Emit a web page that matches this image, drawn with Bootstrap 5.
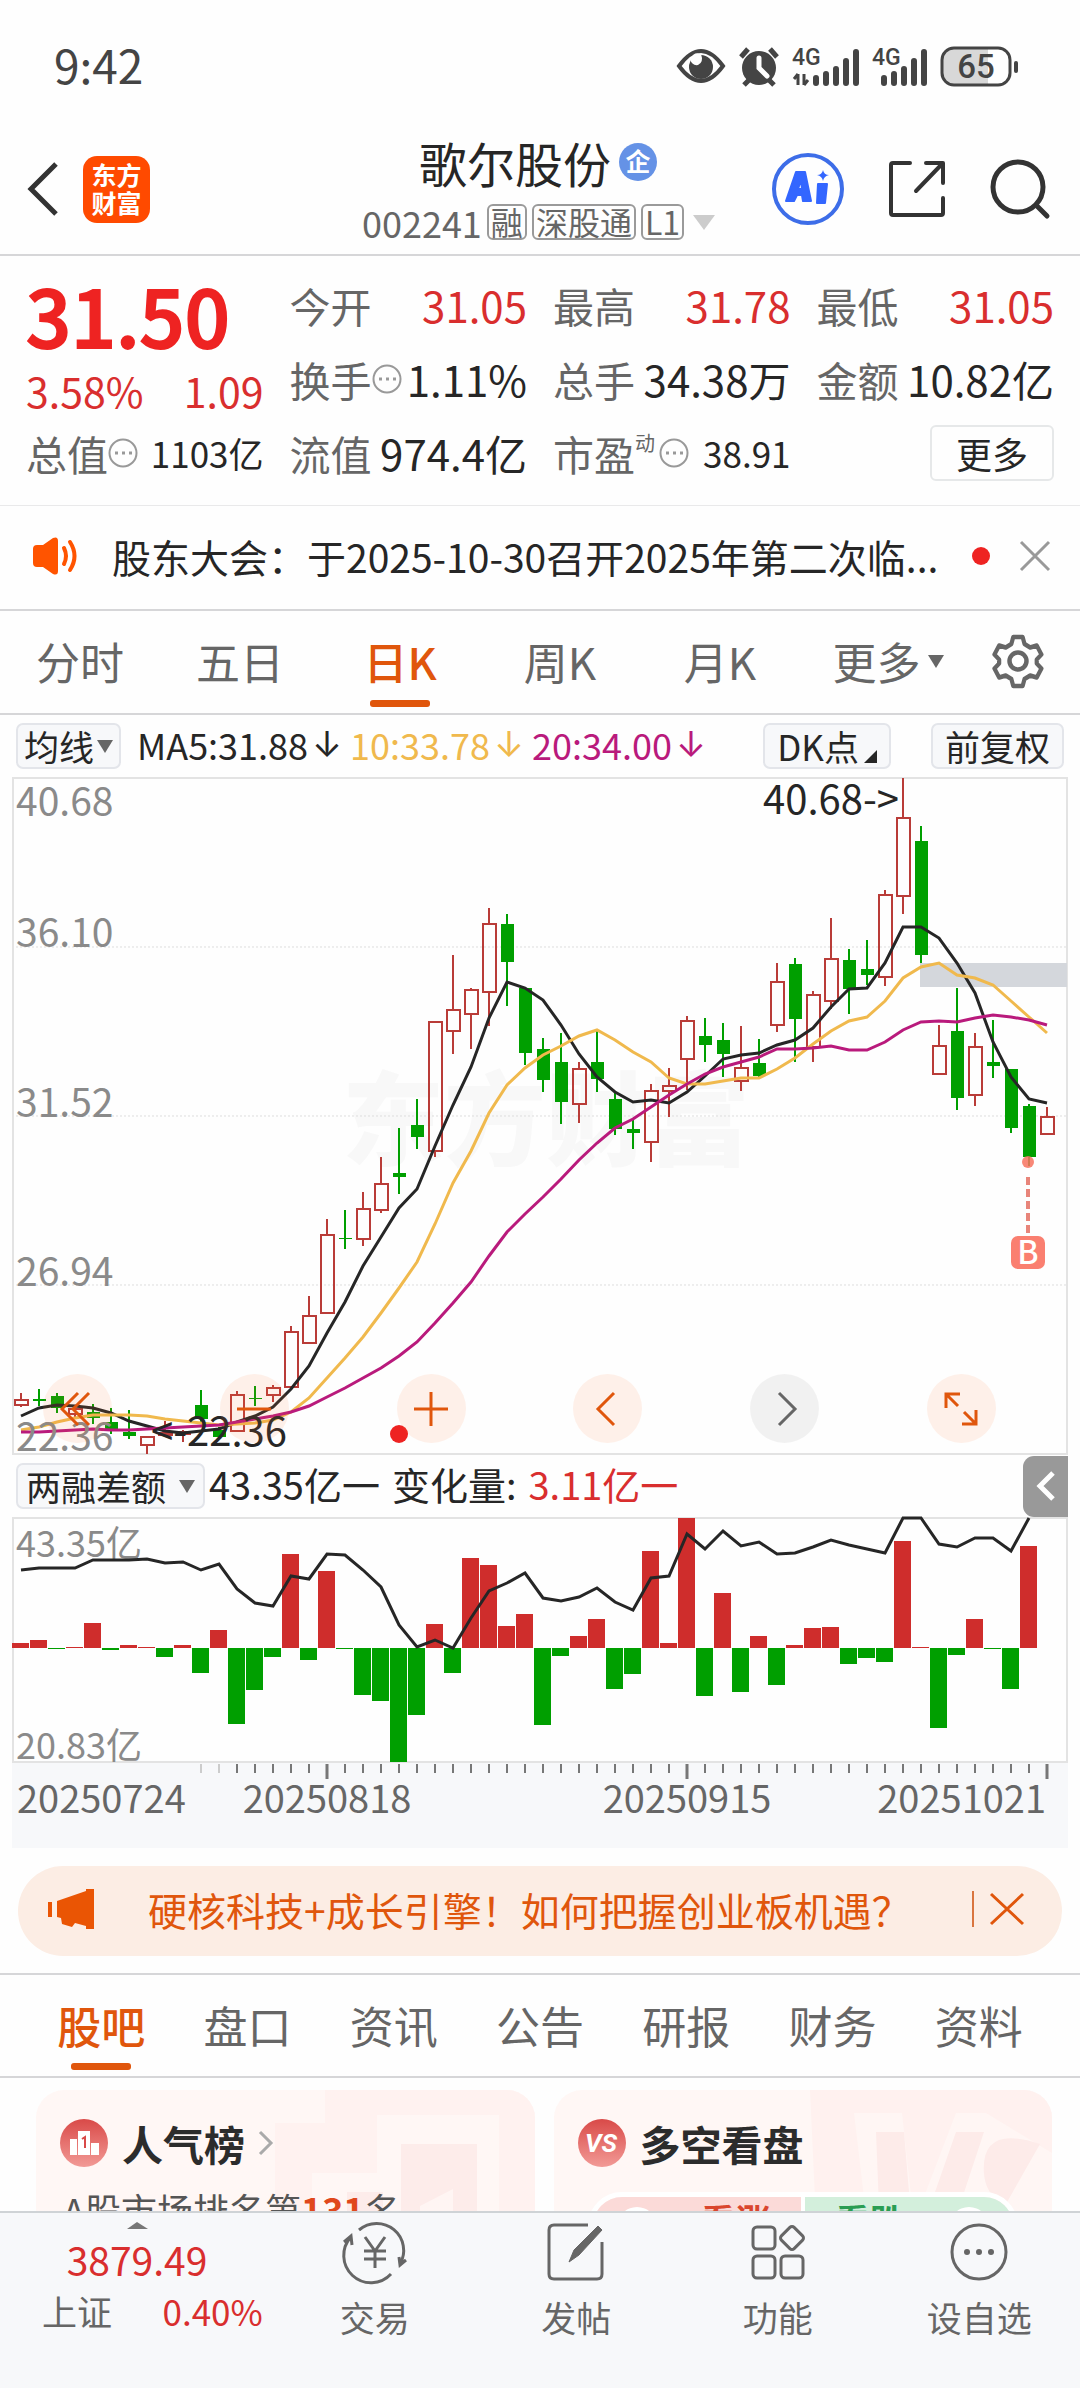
<!DOCTYPE html>
<html lang="zh-CN">
<head>
<meta charset="utf-8">
<meta name="viewport" content="width=device-width, initial-scale=1">
<title>歌尔股份 002241</title>
<link href="https://cdn.jsdelivr.net/npm/bootstrap@5.3.0/dist/css/bootstrap.min.css" rel="stylesheet">
<style>
:root{--up:#d92e2e;--down:#009f00;--accent:#e0560c;--ink:#262626;--muted:#666;--line:#d6d6d8;--soft:#f7f8fa}
body{font-family:"Noto Sans CJK SC","Noto Sans",sans-serif;color:var(--ink);background:#fefefe;font-size:36px;line-height:48px}
svg{display:block;overflow:visible}
button{font-family:inherit;color:inherit;background:none;border:0;padding:0}
a{color:inherit;text-decoration:none}
.app-shell{height:100vh;overflow:hidden}
.hair{border-bottom:2px solid var(--line)}
.hair-soft{border-bottom:1px solid #e9e9ea}
.status-bar{height:134px;padding:0 60px 0 54px;color:#444;font-size:46px}
.status-bar .clock{line-height:60px;margin-top:-6px}
.head-bar{padding:0 30px 10px 27px}
.head-side{flex:1 1 0}
.head-tools{gap:44px}
.stock-name{font-size:48px;line-height:56px}
.code-line{height:44px;margin-top:10px;color:var(--muted);gap:5px}
.tag-box{border:2px solid #9a9a9a;border-radius:6px;font-size:32px;line-height:30px;height:36px;padding:0 2px}
.tri{width:0;height:0;border-left:8px solid transparent;border-right:8px solid transparent;border-top:13px solid #666;display:inline-block}
.tri-lg{border-left-width:11px;border-right-width:11px;border-top-width:15px;border-top-color:#ccc}
.brand-tile{width:67px;height:67px;border-radius:14px;background:#ff4a00;color:#fff;font-size:25px;line-height:28px;font-weight:700;text-align:center;padding-top:4px}
.quote-grid{display:grid;grid-template-columns:repeat(4,1fr);column-gap:26px;padding:12px 26px 15px}
.q-row{height:74px;display:flex;align-items:center;justify-content:space-between;white-space:nowrap}
.q-label{font-size:41px;color:var(--muted);display:flex;align-items:center}
.q-label sup{font-size:20px}
.q-val{font-size:42px}
.q-small{font-size:35px}
.up{color:var(--up)}
.price-now{font-size:79px;line-height:92px;height:92px;font-weight:500;-webkit-text-stroke:2px #ee2322;color:#ee2322}
.price-chg{height:56px;padding-top:4px;font-size:41px}
.more-btn{border:2px solid #e6e8e9;border-radius:6px;width:124px;height:56px;font-size:36px;line-height:48px}
.notice-bar{height:105px;padding:0 30px 4px 33px;font-size:39px}
.notice-bar a{margin-left:33px}
.notice-bar button{margin-left:30px}
.k-tabs{display:grid;grid-template-columns:repeat(5,160fr) 176fr 84fr;padding-right:20px;height:104px;color:var(--muted);font-size:44px}
.info-tabs{display:grid;grid-template-columns:repeat(7,1fr);padding:0 28px;height:103px;color:var(--muted);font-size:44px}
.tab-item{position:relative;display:flex;align-items:center;justify-content:center;gap:7px;padding-bottom:2px}
.tab-item.on{color:var(--accent);font-weight:500}
.tab-item.on::after{content:"";position:absolute;bottom:6px;width:60px;height:7px;border-radius:3px;background:var(--accent)}
.tool-row{height:62px;padding:0 16px;white-space:nowrap}
.chip{background:var(--soft);border:2px solid #e3e5ea;border-radius:7px;height:46px;font-size:35px;line-height:40px;padding:0 8px;display:flex;align-items:center;gap:5px}
.chip-tight{padding:0 6px;gap:3px}
.chip-wide{padding:0 12px}
.chip-dk{margin-right:40px}
.ma{font-size:36px;display:flex;align-items:center;padding-bottom:4px}
.ma i{font-family:"Inter",sans-serif;font-style:normal;font-weight:400;margin-left:4px}
.m10{color:#f0b94d}.m20{color:#b91a7c}
.ind{font-size:38px}
.chart-wrap{margin:0 12px;position:relative}
.chart-wrap svg{width:100%;height:auto}
.chart-wrap text{font-family:"Noto Sans CJK SC","Noto Sans",sans-serif}
.pad-ctl{position:absolute;left:0;right:0;bottom:12px;display:flex;justify-content:space-between;padding:0 72px 0 31px}
.pad-ctl button{width:69px;height:69px;border-radius:50%;background:rgba(255,120,50,.1);display:flex;align-items:center;justify-content:center}
.pad-ctl button.off{background:rgba(0,0,0,.05)}
.pad-ctl svg{width:40px;height:40px}
.ind-row{padding-right:12px}
.fold-btn{background:#999;border-radius:11px 0 0 11px;width:45px;height:61px;display:flex;align-items:center;justify-content:center}
.axis-strip{background:var(--soft)}
.promo{margin:18px 18px 17px;height:90px;border-radius:45px;background:#fcede4;color:var(--accent);font-size:39px;padding:0 38px 4px 30px}
.promo a{margin-left:54px}
.promo button{margin-left:16px}
.promo-split{width:2px;height:36px;background:#d9753f}
.feed{padding:12px 28px 0 36px;gap:19px;font-size:36px}
.feed-card{flex:1 1 0;height:260px;border-radius:28px;background:#fff7f5;position:relative;overflow:hidden;padding:24px}
.feed-card .ghost{position:absolute;right:0;top:0;width:260px;height:260px}
.feed-card h2{font-size:41px;line-height:58px;margin:0;font-weight:700;color:#2c2c2c;position:relative;gap:14px}
.rank-line{position:relative;color:#555;margin-top:13px;padding-left:3px}
.rank-line b{color:#e0481c}
.vote{position:relative;display:flex;margin:20px 10px 0;border:5px solid #fff;border-radius:34px;height:68px;overflow:hidden;font-size:35px;font-weight:700;line-height:46px}
.vote span{flex:1;display:flex;align-items:flex-start;gap:44px;padding:0 24px}
.vote i{width:40px;height:40px;margin-top:10px;border-radius:50%;background:#fff}
.v-up{background:#fbdad8;color:#d9462e;border-right:4px solid #fff}
.v-dn{background:#d3efdc;color:#2a9d53;justify-content:flex-end}
.dock{background:var(--soft);border-top:2px solid #cfd3d6;height:177px;color:var(--muted);font-size:35px;line-height:44px}
.dock-index{flex:0 0 274px;display:grid;grid-template-columns:auto auto;justify-content:space-between;align-content:start;padding:9px 10px 0 42px}
.dock-index .wide{grid-column:1/3;justify-self:center;margin-right:32px}
.dock-index .pts{font-size:39px;line-height:60px}
.dock-item{flex:1 1 0;display:flex;flex-direction:column;align-items:center;padding-top:9px;gap:13px}
.dock-item svg{width:64px;height:60px}
</style>
</head>
<body>
<div class="app-shell d-flex flex-column">

<div class="status-bar d-flex align-items-center justify-content-between flex-shrink-0">
  <span class="clock">9:42</span>
  <svg width="344" height="42" viewBox="0 0 344 42" fill="#444" font-family="Roboto,sans-serif" font-weight="500">
    <path d="M3 20Q25-10 47 20Q25 50 3 20Z" fill="none" stroke="#444" stroke-width="4"/><circle cx="25" cy="21" r="12"/><path d="M14 13q4-8 11-5q3 8-3 11q-6 1-8-6z" fill="#fefefe"/>
    <circle cx="83" cy="22" r="17"/><path d="M65 11l7-8M101 11l-7-8M73 34l-5 5M93 34l5 5" stroke="#444" stroke-width="5"/><path d="M83 12v10l8 8" stroke="#fefefe" stroke-width="5" fill="none" stroke-linecap="round"/>
    <text x="116" y="19" font-size="23">4G</text><path d="M122 28v11M118 33l4-5M128 28v11M132 34l-4 5" stroke="#444" stroke-width="3"/>
    <path d="M140 37v-5M150 37V28M160 37V23M170 37V15M180 37V6" stroke="#444" stroke-width="6" stroke-linecap="round"/>
    <text x="196" y="19" font-size="23">4G</text>
    <path d="M208 37v-5M218 37V28M228 37V23M238 37V15M248 37V6" stroke="#444" stroke-width="6" stroke-linecap="round"/>
    <path d="M278 2h34v36h-34a12 12 0 0 1-12-12V14a12 12 0 0 1 12-12Z" fill="#d8d8d8"/><rect x="266" y="2" width="68" height="37" rx="12" fill="none" stroke="#444" stroke-width="3"/><path d="M340 17v8" stroke="#444" stroke-width="4" stroke-linecap="round"/>
    <text x="300" y="32" font-size="33" text-anchor="middle">65</text>
  </svg>
</div>

<header class="head-bar hair d-flex align-items-center flex-shrink-0">
  <div class="head-side d-flex align-items-center gap-4">
    <button aria-label="返回"><svg width="32" height="54" viewBox="0 0 32 54" fill="none" stroke="#333" stroke-width="5"><path d="M29 2L4 27L29 52"/></svg></button>
    <div class="brand-tile">东方<br>财富</div>
  </div>
  <div class="d-flex flex-column align-items-center">
    <div class="d-flex align-items-center gap-2"><span class="stock-name">歌尔股份</span>
      <svg width="39" height="39" viewBox="0 0 39 39"><circle cx="19" cy="19" r="19" fill="#6592e6"/><text x="19" y="28" font-size="25" font-weight="700" fill="#fff" text-anchor="middle">企</text></svg></div>
    <div class="code-line d-flex align-items-center"><span>002241</span><span class="tag-box">融</span><span class="tag-box">深股通</span><span class="tag-box">L1</span><span class="tri tri-lg ms-1"></span></div>
  </div>
  <div class="head-side head-tools d-flex align-items-center justify-content-end">
    <button aria-label="AI"><svg width="72" height="74" viewBox="0 0 72 74"><circle cx="36" cy="37" r="34" fill="none" stroke="#3d6de8" stroke-width="4"/><g fill="#3366ff" stroke="#3366ff" stroke-width="2" stroke-linejoin="round"><path fill-rule="evenodd" d="M24 20h9l6 29h-8l-1-6h-5l-3 6h-8ZM29 28l-3 9h4Z"/><path d="M46 32h9l-2 19h-8Z"/></g><path d="M51 18q1 5 6 5q-5 1-6 6q-1-5-6-6q5 0 6-5z" fill="#3366ff"/></svg></button>
    <button aria-label="分享"><svg width="58" height="58" viewBox="0 0 58 58" fill="none" stroke="#333" stroke-width="4" stroke-linecap="round" stroke-linejoin="round"><path d="M22 3H5a2 2 0 0 0-2 2v48a2 2 0 0 0 2 2h48a2 2 0 0 0 2-2V38M38 3h17v20M54 4L28 31"/></svg></button>
    <button aria-label="搜索"><svg width="60" height="60" viewBox="0 0 60 60" fill="none" stroke="#333" stroke-width="5" stroke-linecap="round"><circle cx="28" cy="28" r="25"/><path d="M47 47L57 57"/></svg></button>
  </div>
</header>

<section class="quote-grid hair-soft flex-shrink-0">
  <div>
    <div class="price-now">31.50</div>
    <div class="price-chg up d-flex align-items-center justify-content-between"><span>3.58%</span><span>1.09</span></div>
    <div class="q-row"><span class="q-label">总值<svg width="30" height="30" viewBox="0 0 30 30"><circle cx="15" cy="15" r="13.500" fill="none" stroke="#999" stroke-width="2"/><path d="M7 15h3m4 0h3m4 0h3" stroke="#999" stroke-width="3"/></svg></span><span class="q-small">1103亿</span></div>
  </div>
  <div>
    <div class="q-row"><span class="q-label">今开</span><span class="q-val up">31.05</span></div>
    <div class="q-row"><span class="q-label">换手<svg width="30" height="30" viewBox="0 0 30 30"><circle cx="15" cy="15" r="13.500" fill="none" stroke="#999" stroke-width="2"/><path d="M7 15h3m4 0h3m4 0h3" stroke="#999" stroke-width="3"/></svg></span><span class="q-val">1.11%</span></div>
    <div class="q-row"><span class="q-label">流值</span><span class="q-val">974.4亿</span></div>
  </div>
  <div>
    <div class="q-row"><span class="q-label">最高</span><span class="q-val up">31.78</span></div>
    <div class="q-row"><span class="q-label">总手</span><span class="q-val">34.38万</span></div>
    <div class="q-row"><span class="q-label">市盈<sup>动</sup><svg class="ms-1" width="30" height="30" viewBox="0 0 30 30"><circle cx="15" cy="15" r="13.500" fill="none" stroke="#999" stroke-width="2"/><path d="M7 15h3m4 0h3m4 0h3" stroke="#999" stroke-width="3"/></svg></span><span class="q-small">38.91</span></div>
  </div>
  <div>
    <div class="q-row"><span class="q-label">最低</span><span class="q-val up">31.05</span></div>
    <div class="q-row"><span class="q-label">金额</span><span class="q-val">10.82亿</span></div>
    <div class="q-row justify-content-end"><button class="more-btn">更多</button></div>
  </div>
</section>

<section class="notice-bar hair d-flex align-items-center flex-shrink-0">
  <svg width="46" height="38" viewBox="0 0 46 38"><path d="M4 8h6L20 1q5-2 5 3v30q0 5-5 3L10 30H4q-4 0-4-4V12q0-4 4-4Z" fill="#ff5400"/><path d="M31 11q4 8 0 16M37 5q9 14 0 28" fill="none" stroke="#ff5400" stroke-width="4" stroke-linecap="round"/></svg>
  <a href="#" class="flex-grow-1 text-nowrap">股东大会：于2025-10-30召开2025年第二次临...</a>
  <svg width="18" height="18" viewBox="0 0 18 18"><circle cx="9" cy="9" r="9" fill="#ee2322"/></svg>
  <button aria-label="关闭"><svg width="30" height="30" viewBox="0 0 30 30" stroke="#999" stroke-width="3"><path d="M1 1L29 29M29 1L1 29"/></svg></button>
</section>

<nav class="k-tabs hair flex-shrink-0">
  <button class="tab-item">分时</button><button class="tab-item">五日</button><button class="tab-item on">日K</button><button class="tab-item">周K</button><button class="tab-item">月K</button><button class="tab-item">更多<span class="tri"></span></button>
  <button class="tab-item" aria-label="设置"><svg width="52" height="54" viewBox="0 0 52 54" fill="none" stroke="#666" stroke-width="4.500" stroke-linejoin="round"><path d="M21 3h10l2 7 6 3.500 7-2 5 9-5 5v4l5 5-5 9-7-2-6 3.500-2 7H21l-2-7-6-3.500-7 2-5-9 5-5v-4l-5-5 5-9 7 2L19 10Z" transform="translate(1.500 0) scale(.94 1)"/><circle cx="26" cy="27" r="8.500"/></svg></button>
</nav>

<section class="tool-row d-flex align-items-center flex-shrink-0">
  <button class="chip chip-tight">均线<span class="tri"></span></button>
  <span class="ma ms-3">MA5:31.88<i>↓</i></span>
  <span class="ma m10 ms-2">10:33.78<i>↓</i></span>
  <span class="ma m20 ms-2">20:34.00<i>↓</i></span>
  <button class="chip chip-wide chip-dk ms-auto">DK点<svg width="13" height="13" class="align-self-end mb-1" viewBox="0 0 13 13"><path d="M13 0v13H0z" fill="#262626"/></svg></button>
  <button class="chip chip-wide">前复权</button>
</section>

<section class="chart-wrap flex-shrink-0">
  <svg id="kline" viewBox="0 0 1056 678" role="img" aria-label="日K线图"></svg>
  <div class="pad-ctl">
    <button aria-label="最左"><svg viewBox="0 0 40 40" fill="none" stroke="#e0560c" stroke-width="3"><path d="M20 4L4 20L20 36M31 4L15 20L31 36"/></svg></button>
    <button aria-label="缩小"><svg viewBox="0 0 40 40" stroke="#e0560c" stroke-width="3"><path d="M3 20h34"/></svg></button>
    <button aria-label="放大"><svg viewBox="0 0 40 40" stroke="#e0560c" stroke-width="3"><path d="M3 20h34M20 3v34"/></svg></button>
    <button aria-label="左移"><svg viewBox="0 0 40 40" fill="none" stroke="#e0560c" stroke-width="3"><path d="M26 4L10 20L26 36"/></svg></button>
    <button class="off" aria-label="右移"><svg viewBox="0 0 40 40" fill="none" stroke="#666" stroke-width="3"><path d="M14 4L30 20L14 36"/></svg></button>
    <button aria-label="全屏"><svg viewBox="0 0 40 40" fill="none" stroke="#e0560c" stroke-width="3"><path d="M5 19V5H19M5 5L17 17M35 21V35H21M35 35L23 23"/></svg></button>
  </div>
</section>

<section class="tool-row ind-row d-flex align-items-center flex-shrink-0">
  <button class="chip">两融差额<span class="tri ms-2"></span></button>
  <span class="ma ind ms-1">43.35亿一</span>
  <span class="ma ind ms-2 ps-1">变化量:</span>
  <span class="ma ind ms-2 ps-1 up">3.11亿一</span>
  <button class="fold-btn ms-auto" aria-label="展开"><svg width="18" height="30" viewBox="0 0 18 30" fill="none" stroke="#fff" stroke-width="5"><path d="M16 2L3 15L16 28"/></svg></button>
</section>

<section class="chart-wrap flex-shrink-0">
  <svg id="margin" viewBox="0 0 1056 246" role="img" aria-label="两融差额"></svg>
  <svg id="dates" class="axis-strip" viewBox="0 0 1056 85" role="img" aria-label="日期"></svg>
</section>

<section class="promo d-flex align-items-center flex-shrink-0">
  <svg width="46" height="40" viewBox="0 0 46 40" fill="#ea5504"><path d="M0 13h4v15H0zM9 12L38 2V0h8v40h-8v-3l-11-3-3 4-10-3-1-6-4-1z"/></svg>
  <a href="#" class="flex-grow-1 text-nowrap">硬核科技+成长引擎！如何把握创业板机遇？</a>
  <span class="promo-split"></span>
  <button aria-label="关闭"><svg width="34" height="32" viewBox="0 0 34 32" stroke="#e0560c" stroke-width="3"><path d="M1 1L33 31M33 1L1 31"/></svg></button>
</section>
<div class="hair flex-shrink-0"></div>

<nav class="info-tabs hair flex-shrink-0">
  <button class="tab-item on">股吧</button><button class="tab-item">盘口</button><button class="tab-item">资讯</button><button class="tab-item">公告</button><button class="tab-item">研报</button><button class="tab-item">财务</button><button class="tab-item">资料</button>
</nav>

<main class="feed d-flex flex-grow-1 overflow-hidden">
  <article class="feed-card">
    <svg class="ghost" viewBox="0 0 260 260"><path d="M50 0h210v260H50V150H0V33h50z" fill="#fff2f0"/><path d="M102 25h122v235H102zM37 83h65v177H37z" fill="#fff7f5"/><path d="M126 54h76v206h-76zM72 102h36v158H72z" fill="#fdecea"/><path d="M145 116l33-17v161h-20V124l-13 6z" fill="#fff5f3"/></svg>
    <h2 class="d-flex align-items-center"><svg width="48" height="48" viewBox="0 0 48 48"><defs><linearGradient id="rg" x2="0" y2="1"><stop stop-color="#d94a48"/><stop offset="1" stop-color="#f29a96"/></linearGradient></defs><circle cx="24" cy="24" r="24" fill="url(#rg)"/><path d="M10 20h7v16h-7zM18 12h12v24H18zM31 24h8v12h-8z" fill="#fff"/><path d="M22 20l3-2v11" fill="none" stroke="#d94a48" stroke-width="2"/></svg><span>人气榜</span><svg width="14" height="24" viewBox="0 0 14 24" fill="none" stroke="#aaa" stroke-width="3"><path d="M1 1L12 12L1 23"/></svg></h2>
    <div class="rank-line">A股市场排名第<b>131</b>名</div>
  </article>
  <article class="feed-card">
    <svg class="ghost" viewBox="0 0 260 260"><path d="M18 0h242v260H30z" fill="#fff1ef"/><path d="M62 23h48l12 110 42-110h30l66 40v197H90z" fill="#fff6f4"/><path d="M84 42h28l10 120 42-120h28l-66 200h-34zM248 54q-60-20-56 30c4 40 46 30 44 70s-50 30-56 20" fill="#fdebe9"/></svg>
    <h2 class="d-flex align-items-center"><svg width="48" height="48" viewBox="0 0 48 48"><circle cx="24" cy="24" r="24" fill="url(#rg)"/><text x="23" y="33" font-family="Roboto,sans-serif" font-size="26" font-weight="700" font-style="italic" fill="#fff" text-anchor="middle">VS</text></svg><span>多空看盘</span></h2>
    <div class="vote"><span class="v-up"><i></i>看涨</span><span class="v-dn">看跌<i></i></span></div>
  </article>
</main>

<footer class="dock d-flex flex-shrink-0">
  <a href="#" class="dock-index">
    <svg class="wide" width="21" height="7" viewBox="0 0 21 7"><path d="M10 0L21 7H0z" fill="#777"/></svg>
    <span class="wide pts up">3879.49</span>
    <span>上证</span><span class="up">0.40%</span>
  </a>
  <a href="#" class="dock-item"><svg viewBox="0 0 64 60" fill="none" stroke="#666" stroke-width="3"><path d="M16 8A27 27 0 0 1 57 42M63 38l-6 5-1-8M48 52A27 27 0 0 1 8 15M1 20l7-6 1 9M22 15l10 14 10-14M32 29v17M21 29h22M21 37h22"/></svg>交易</a>
  <a href="#" class="dock-item"><svg viewBox="0 0 64 60" fill="none" stroke="#666" stroke-width="3"><path d="M44 3H10q-5 0-5 5v44q0 5 5 5h43q5 0 5-5V20"/><path d="M25 40l5-12L54 4l4 4L35 33Z" fill="#666" stroke-width="1"/></svg>发帖</a>
  <a href="#" class="dock-item"><svg viewBox="0 0 64 60" fill="none" stroke="#666" stroke-width="3"><rect x="7" y="5" width="22" height="22" rx="4"/><rect x="7" y="34" width="22" height="22" rx="4"/><rect x="35" y="34" width="22" height="22" rx="4"/><rect x="37" y="7" width="18" height="18" rx="3" transform="rotate(45 46 16)"/></svg>功能</a>
  <a href="#" class="dock-item"><svg viewBox="0 0 64 60" fill="none" stroke="#666" stroke-width="3"><circle cx="32" cy="30" r="27"/><g fill="#666" stroke="none"><circle cx="20" cy="30" r="3"/><circle cx="32" cy="30" r="3"/><circle cx="44" cy="30" r="3"/></g></svg>设自选</a>
</footer>
</div>

<script>
// One trading day per entry: direction, then high, body top, body bottom and low as heights in the plot.
const days = `r615,622,627,629 g611,621,623,628 g615,618,630,635 r630,631,636,639 g626,634,640,646 g630,644,651,656 g632,654,658,661 r659,659,667,676 r643,655,657,658 r652,654,656,664
g612,627,641,644 g649,652,659,660 r613,617,653,654 g608,620,621,628 r607,610,617,624 r548,554,609,609 r518,538,565,566 r441,457,535,535 g432,460,461,471 r414,431,461,468
r379,406,432,435 g350,395,399,416 g321,347,359,371 r244,244,373,379 r177,232,253,276 r210,212,236,271 r130,146,214,248 g136,146,184,228 g210,210,275,287 g260,271,302,314
g255,284,324,346 r284,291,326,345 g252,284,301,314 g315,321,351,357 g340,351,355,371 r306,313,364,384 r290,308,313,339 r238,243,281,312 g240,258,267,284 g245,262,276,299
r248,290,303,313 g261,285,298,299 r185,204,247,254 g180,186,241,284 r213,217,269,284 r140,181,223,231 g171,182,211,236 g162,191,197,207 r112,117,199,208 r0,40,118,136
g48,63,177,185 r247,268,296,296 g210,253,320,332 r255,269,317,328 g242,284,288,300 g291,291,350,355 g326,328,379,388 r329,339,356,356`.trim().split(/\s+/);
const ma5=[638,630,627,628,630,635,643,648,653,655,653,651,644,638,629,611,588,555,524,488,459,430,411,368,327,289,240,204,210,222,247,276,299,314,324,322,325,314,298,281,277,275,267,262,250,229,211,210,185,149,149,160,185,215,264,299,321,325];
const ma10=[652,649,644,640,637,637,637,638,641,643,645,647,646,645,642,634,620,600,580,559,535,510,484,446,405,373,335,307,290,277,268,258,252,262,274,284,300,306,306,303,300,300,291,280,266,253,243,239,223,200,189,185,197,200,207,223,239,255];
const ma20=[654,654,653,652,651,652,652,651,650,649,648,647,644,641,638,634,628,619,610,600,590,578,564,545,525,504,478,454,436,419,401,382,365,350,341,329,317,306,296,289,284,279,271,271,270,268,272,272,264,252,244,243,244,240,237,239,242,247];
const diff=[5,8,-1,1,25,-2,3,1,-9,3,-25,18,-76,-42,-9,94,-12,77,-1,-47,-53,-114,-67,24,-25,90,83,22,34,-77,-8,12,29,-41,-26,97,5,130,-48,55,-44,12,-37,3,20,21,-16,-10,-14,107,1,-80,-7,29,-1,-41,102];
const total=[52,50,50,50,42,42,42,41,45,44,52,46,71,85,88,58,61,36,37,52,69,107,129,122,130,100,73,65,55,80,83,79,70,84,92,60,58,16,31,13,28,24,36,35,29,22,27,31,35,0,0,26,29,20,20,33,0];
const cx = i => 9 + 18 * i;
const line = (a, c) => `<polyline points="${a.map((y, i) => cx(i) + ',' + y).join(' ')}" fill="none" stroke="${c}" stroke-width="3"/>`;
const label = (x, y, t, c = '#8a8a8a', s = 39, a = 'start') => `<text x="${x}" y="${y}" font-size="${s}" fill="${c}" text-anchor="${a}">${t}</text>`;

let k = `<text x="534" y="380" font-size="102" font-weight="900" fill="#f8f8f8" text-anchor="middle">东方财富</text>`;
[169, 338, 507].forEach(y => k += `<path d="M0 ${y}H1055" stroke="#ddd" stroke-dasharray="2 2"/>`);
k += `<rect x="1" y="0" width="1054" height="676" fill="none" stroke="#e3e3e3" stroke-width="2"/><rect x="908" y="185" width="147" height="24" fill="#d4d7dc"/>`;
days.forEach((d, i) => {
  const up = d[0] === 'r', [h, t, b, l] = d.slice(1).split(',').map(Number), c = up ? '#b93c38' : '#009f00', x = cx(i);
  k += `<path d="M${x} ${h}V${t}M${x} ${b}V${l}" stroke="${c}" stroke-width="2"/>`;
  k += up ? `<rect x="${x - 6}" y="${t}" width="13" height="${Math.max(b - t, 1)}" fill="none" stroke="${c}" stroke-width="2"/>`
          : `<rect x="${x - 6}" y="${t}" width="13" height="${Math.max(b - t, 1)}" fill="${c}"/>`;
});
k += line(ma5, '#262626') + line(ma10, '#f0b94d') + line(ma20, '#b91a7c');
[[38, '40.68'], [169, '36.10'], [339, '31.52'], [508, '26.94'], [673, '22.36']].forEach(([y, t]) => k += label(4, y, t));
k += label(887, 36, '40.68-&gt;', '#262626', 40, 'end') + label(275, 668, '&lt;-22.36', '#262626', 40, 'end');
k += `<circle cx="387" cy="656" r="9" fill="#ee2322"/><circle cx="1016" cy="384" r="6" fill="#f7735f" opacity=".85"/><path d="M1016 399V456" stroke="#e8857a" stroke-width="4" stroke-dasharray="8 4"/><rect x="999" y="458" width="34" height="33" rx="7" fill="#fa7f70"/>`
   + `<text x="1016" y="486" font-size="32" font-weight="500" fill="#fff" text-anchor="middle">B</text>`;
document.getElementById('kline').innerHTML = `<g transform="translate(0 1)">${k}</g>`;

let m = `<rect x="1" y="0" width="1054" height="244" fill="none" stroke="#e3e3e3" stroke-width="2"/>`;
m += label(4, 39, '43.35亿', '#8a8a8a', 36) + label(4, 241, '20.83亿', '#8a8a8a', 36);
diff.forEach((v, i) => m += `<rect x="${18 * i}" y="${v > 0 ? 130 - v : 130}" width="17" height="${Math.abs(v)}" fill="${v > 0 ? '#cf2d2c' : '#009f00'}"/>`);
m += line(total, '#262626');
document.getElementById('margin').innerHTML = `<g transform="translate(0 1)">${m}</g>`;

let a = '';
for (let i = 10; i < 58; i++) {
  const big = i % 20 === 17;
  a += `<path d="M${cx(i)} 1v${big ? 15 : 9}" stroke="${i < 12 ? '#ccc' : '#777'}" stroke-width="${big ? 3 : 2}"/>`;
}
a += label(5, 50, '20250724', '#666', 38) + label(315, 50, '20250818', '#666', 38, 'middle') + label(675, 50, '20250915', '#666', 38, 'middle') + label(1034, 50, '20251021', '#666', 38, 'end');
document.getElementById('dates').innerHTML = a;
</script>
<script src="https://cdn.jsdelivr.net/npm/bootstrap@5.3.0/dist/js/bootstrap.bundle.min.js"></script>
</body>
</html>
